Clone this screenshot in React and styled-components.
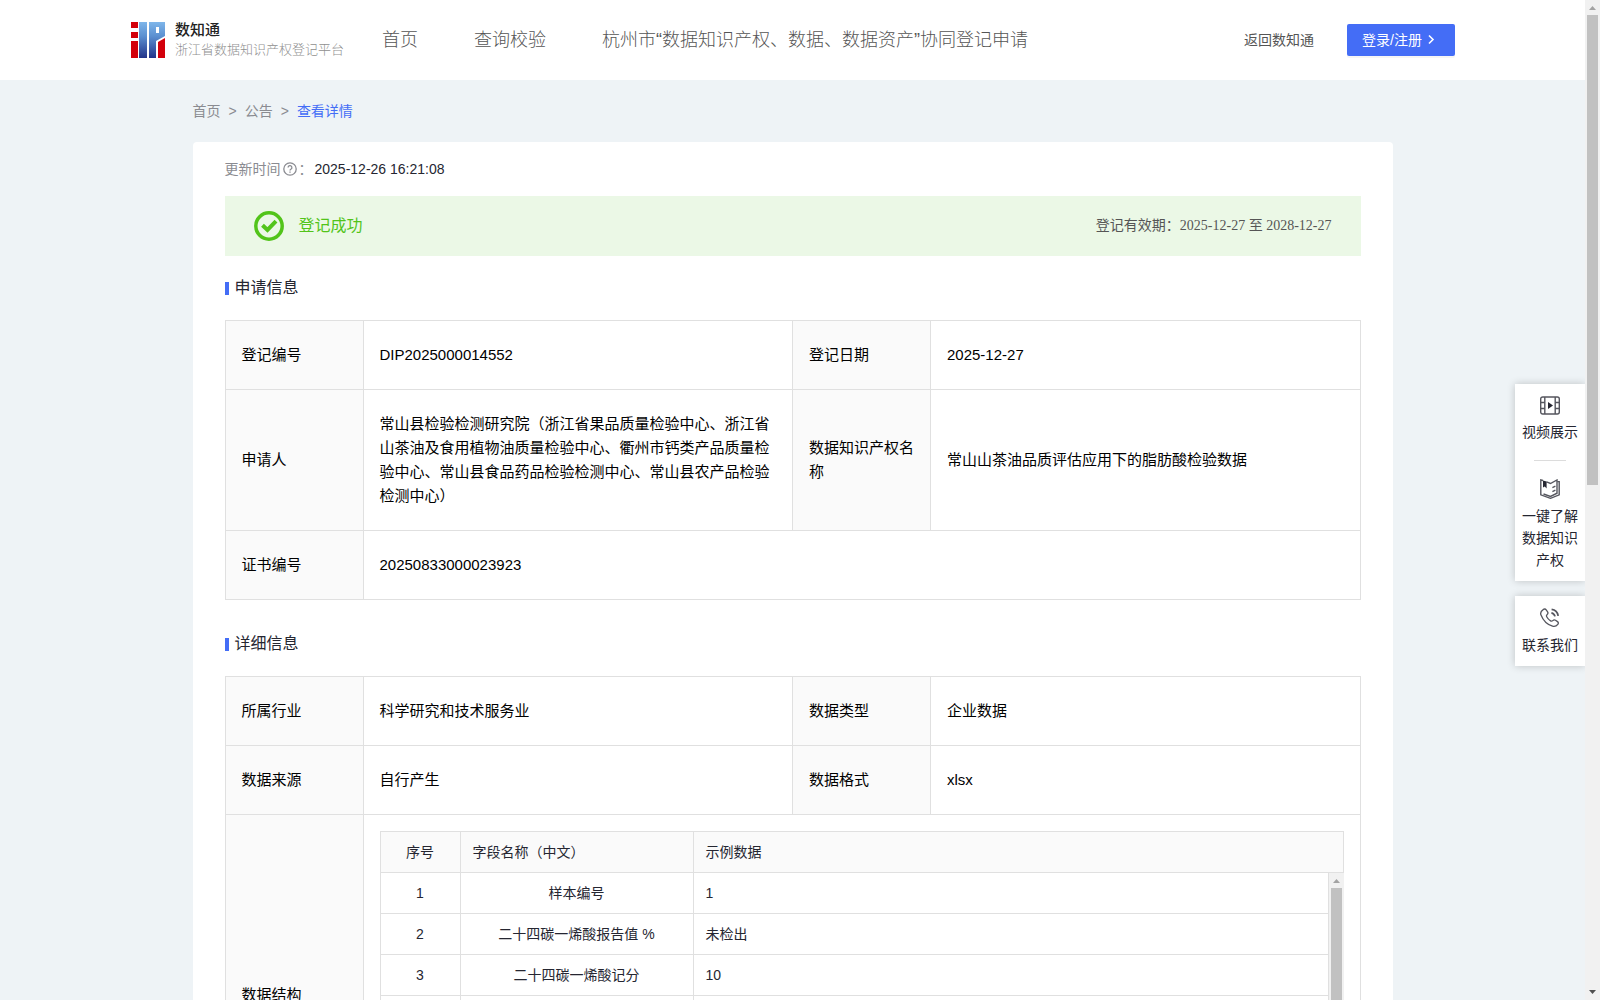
import React from 'react';
import styled, { createGlobalStyle, ThemeProvider } from 'styled-components';

const theme = {
  primary: '#446df6',
  success: '#52c41a',
  successFill: '#ebf8e6',
  page: '#eef3f6',
  line: '#e0e0e0',
  fill: '#fafafa',
  text: '#252631',
  nav: '#555555',
  muted: '#8a8b91',
  sans: '"Liberation Sans", "Noto Sans CJK SC", sans-serif',
  serif: '"Liberation Serif", "Noto Sans CJK SC", serif'
};

const GlobalStyle = createGlobalStyle`
  * {
    box-sizing: border-box;
  }

  body {
    margin: 0;
    font-family: ${theme.sans};
    font-size: 14px;
    line-height: 22px;
    color: ${theme.text};
  }

  a {
    color: inherit;
    text-decoration: none;
  }
`;

const Shell = styled.div`
  display: flex;
  height: 100vh;
  overflow: hidden;
  position: relative;
`;

const Page = styled.div`
  background: ${props => props.theme.page};
  flex: 1;
  min-width: 0;
  overflow: hidden;
`;

const Header = styled.header`
  align-items: center;
  background: #fff;
  display: flex;
  height: 80px;
  padding: 0 130px 0 131px;
`;

const Brand = styled.a`
  align-items: center;
  display: flex;
  gap: 10px;
  margin-right: 38px;
`;

const BrandText = styled.span`
  display: flex;
  flex-direction: column;
`;

const BrandName = styled.strong`
  color: #222;
  font-size: 15px;
  font-weight: 500;
  line-height: 20px;
`;

const BrandSub = styled.span`
  color: #8f8f8f;
  font-size: 13px;
  font-weight: 300;
  line-height: 20px;
`;

const Nav = styled.nav`
  color: ${props => props.theme.nav};
  display: flex;
  flex: 1;
  font-size: 18px;
  font-weight: 300;
  gap: 56px;
  line-height: 24px;
  white-space: nowrap;
`;

const BackLink = styled.a`
  color: ${props => props.theme.nav};
  margin-right: 33px;
`;

const LoginButton = styled.button`
  align-items: center;
  background: ${props => props.theme.primary};
  border: 0;
  border-radius: 2px;
  box-shadow: 0 2px 0 rgba(0, 0, 0, 0.04);
  color: #fff;
  display: flex;
  font: inherit;
  gap: 4px;
  height: 32px;
  padding: 0 15px;
  white-space: nowrap;
`;

const Container = styled.main`
  margin: 0 auto;
  max-width: 1200px;
`;

const Breadcrumb = styled.nav`
  color: ${props => props.theme.muted};
  display: flex;
  gap: 8px;
  padding: 20px 0;

  [aria-current] {
    color: ${props => props.theme.primary};
  }
`;

const Card = styled.div`
  background: #fff;
  border-radius: 4px;
  padding: 0 32px 32px;
`;

const Updated = styled.div`
  align-items: center;
  display: flex;
  height: 54px;
`;

const UpdatedLabel = styled.span`
  align-items: center;
  color: ${props => props.theme.muted};
  display: flex;
  gap: 2px;
  margin-right: 2px;
`;

const Banner = styled.div`
  align-items: center;
  background: ${props => props.theme.successFill};
  display: flex;
  height: 60px;
  justify-content: space-between;
  padding: 0 29px;
`;

const BannerStatus = styled.div`
  align-items: center;
  color: ${props => props.theme.success};
  display: flex;
  font-size: 16px;
  gap: 15px;
`;

const BannerPeriod = styled.div`
  color: ${props => props.theme.nav};
  font-family: ${props => props.theme.serif};
`;

const SectionTitle = styled.h2`
  align-items: center;
  display: flex;
  font-size: 16px;
  font-weight: 400;
  gap: 6px;
  height: 64px;
  margin: 0;

  &::before {
    background: ${props => props.theme.primary};
    content: '';
    height: 13px;
    width: 4px;
  }
`;

const InfoTable = styled.table`
  border: solid ${props => props.theme.line};
  border-width: 1px 0 0 1px;
  border-spacing: 0;
  color: #000;
  font-size: 15px;
  line-height: 24px;
  margin-bottom: 12px;
  table-layout: fixed;
  width: 100%;
`;

const LabelCol = styled.col`
  width: 138px;
`;

const InfoLabel = styled.th`
  background: ${props => props.theme.fill};
  border: solid ${props => props.theme.line};
  border-width: 0 1px 1px 0;
  font-weight: 400;
  padding: 22px 15px 22px 16px;
  text-align: left;
`;

const InfoValue = styled.td`
  border: solid ${props => props.theme.line};
  border-width: 0 1px 1px 0;
  padding: ${props => (props.$nested ? '16px' : '22px 16px')};
`;

const FieldTable = styled.table`
  border-left: 1px solid ${props => props.theme.line};
  border-spacing: 0;
  color: ${props => props.theme.text};
  flex: 1;
  font-size: 14px;
  line-height: 22px;
  table-layout: fixed;
  width: 100%;

  th,
  td {
    border: solid ${props => props.theme.line};
    border-width: 0 1px 1px 0;
    font-weight: 400;
    height: 41px;
    padding: 0 12px;
    text-align: left;
  }

  th {
    background: ${props => props.theme.fill};
    border-top-width: 1px;
    height: 42px;
  }

  th:first-child,
  td:nth-child(-n + 2) {
    text-align: center;
  }
`;

const IndexCol = styled.col`
  width: 80px;
`;

const NameCol = styled.col`
  width: 233px;
`;

const FieldBody = styled.div`
  align-items: flex-start;
  display: flex;
  height: 286px;
  overflow: hidden;
`;

const Track = styled.div`
  align-items: center;
  align-self: stretch;
  background: #f1f1f1;
  display: flex;
  flex: none;
  flex-direction: column;
  width: 15px;
`;

const Thumb = styled.div`
  background: #c1c1c1;
  height: ${props => props.$size};
  width: 11px;
`;

const Arrow = styled.svg`
  display: block;
  flex: none;
  height: 15px;
  margin-top: ${props => (props.$end ? 'auto' : 0)};
  width: 15px;
`;

const Floating = styled.aside`
  display: flex;
  flex-direction: column;
  gap: 15px;
  position: absolute;
  right: 15px;
  top: 384px;
  width: 70px;
`;

const FloatCard = styled.div`
  background: #fff;
  box-shadow: 0 0 8px rgba(0, 0, 0, 0.2);
  clip-path: inset(-10px 0 -10px -10px);
  padding: 0 7px;
`;

const FloatLink = styled.a`
  align-items: center;
  display: flex;
  flex-direction: column;
  gap: 6px;
  padding: 12px 0 10px;
  text-align: center;

  & + &::before {
    background: #dcdcdc;
    content: '';
    height: 1px;
    margin: -1px 0 12px;
    width: 32px;
  }

  &:not(:last-child) {
    padding-bottom: 18px;
  }

  & + & {
    padding-top: 0;
  }
`;

const LogoMark = () => (
  <svg width="34" height="36" viewBox="0 0 34 36" aria-hidden="true">
    <defs>
      <linearGradient id="logo-blue" x1="0" y1="0" x2="0" y2="36" gradientUnits="userSpaceOnUse">
        <stop offset="0" stopColor="#7fb6ea" />
        <stop offset="0.4" stopColor="#5b8fd0" />
        <stop offset="1" stopColor="#22348a" />
      </linearGradient>
    </defs>
    <path fill="#d3000b" d="M0 0h7v6H0zM0 10h7v6H0zM0 19h7v17H0zM27 20l7-4v20h-7z" />
    <path fill="url(#logo-blue)" d="M8 0h8v36H8zM18 0h16v14l-9 5v17h-7zM25 5v6h3V5z" fillRule="evenodd" />
  </svg>
);

const ChevronIcon = () => (
  <svg width="14" height="14" viewBox="0 0 14 14" fill="none" stroke="currentColor" strokeWidth="1.6" aria-hidden="true">
    <path d="M3 2.5l4 4-4 4" />
  </svg>
);

const HelpIcon = () => (
  <svg width="14" height="14" viewBox="0 0 14 14" fill="none" stroke="currentColor" strokeWidth="1.3" aria-hidden="true">
    <circle cx="7" cy="7" r="6.2" />
    <path d="M5.1 5.6a1.9 1.9 0 1 1 2.8 1.6c-.6.4-.9.6-.9 1.3M7 9.6v1.2" />
  </svg>
);

const SuccessIcon = () => (
  <svg width="30" height="30" viewBox="0 0 30 30" fill="none" stroke="currentColor" aria-hidden="true">
    <circle cx="15" cy="15" r="13.2" strokeWidth="3.5" />
    <path d="M8.5 14.2l5 4.8 8.5-8.8" strokeWidth="4" />
  </svg>
);

const VideoIcon = () => (
  <svg width="20" height="19" viewBox="0 0 20 19" fill="none" stroke="#55565e" strokeWidth="1.4" aria-hidden="true">
    <rect x="0.7" y="1" width="18.6" height="17" rx="2" />
    <path d="M4.8 1v17M15.2 1v17M.7 6.5h4M.7 12.5h4M15.2 6.5h4M15.2 12.5h4" />
    <path d="M8 6l5 3.5L8 13z" fill="#252631" stroke="none" />
  </svg>
);

const BookIcon = () => (
  <svg width="20" height="20" viewBox="0 0 20 20" fill="none" stroke="#55565e" strokeWidth="1.4" aria-hidden="true">
    <path d="M3 1.5L.8 1v14.8l9.7 3.5 8.7-3.5V2.6h-2" />
    <path d="M6.5 2.8l4 1.7L17 1v13.2l-6.5 3.2-7-2.4M12.4 8.6l3-1.4M12.4 12.6l3-1.4" />
    <path d="M3 1.4l3.6 1.2v7L4.8 7.6 3 8.4z" fill="#252631" stroke="none" />
  </svg>
);

const PhoneIcon = () => (
  <svg width="20" height="20" viewBox="0 0 20 20" fill="none" stroke="#55565e" strokeWidth="1.3" aria-hidden="true">
    <path d="M3.2 1.6c1-.9 2.2-.8 3 .2l1.4 2c.6 1 .4 1.9-.4 2.6-.9.8-1 1.4-.5 2.3.9 1.7 2.2 3.1 3.9 4.2.8.5 1.5.4 2.2-.3.8-.8 1.7-1 2.7-.4l2 1.4c1 .7 1.1 1.8.3 2.8-1.3 1.7-3.2 2.4-5.3 1.8C7.3 16.6 3.1 12.3 1 7 .2 5 1.2 2.9 3.2 1.6z" />
    <path d="M11.4 4.8c2 .4 3.1 1.6 3.6 3.6M11.6 1.4c3.6.5 6 2.9 6.6 6.5" strokeWidth="1.8" />
  </svg>
);

const ScrollArrow = ({ down }) => (
  <Arrow viewBox="0 0 15 15" $end={down} aria-hidden="true">
    <path d={down ? 'M4 5h7l-3.5 4z' : 'M4 10h7l-3.5-4z'} fill={down ? '#505050' : '#a3a3a3'} />
  </Arrow>
);

const fields = [
  ['1', '样本编号', '1'],
  ['2', '二十四碳一烯酸报告值 %', '未检出'],
  ['3', '二十四碳一烯酸记分', '10'],
  ['', '', '']
];

const InfoCols = () => (
  <colgroup>
    <LabelCol />
    <col />
    <LabelCol />
    <col />
  </colgroup>
);

const FieldCols = () => (
  <colgroup>
    <IndexCol />
    <NameCol />
    <col />
  </colgroup>
);

const Fields = () => (
  <>
    <FieldTable>
      <FieldCols />
      <thead>
        <tr>
          <th>序号</th>
          <th>字段名称（中文）</th>
          <th>示例数据</th>
        </tr>
      </thead>
    </FieldTable>
    <FieldBody>
      <FieldTable>
        <FieldCols />
        <tbody>
          {fields.map(([index, name, sample]) => (
            <tr key={index}>
              <td>{index}</td>
              <td>{name}</td>
              <td>{sample}</td>
            </tr>
          ))}
        </tbody>
      </FieldTable>
      <Track>
        <ScrollArrow />
        <Thumb $size="140px" />
        <ScrollArrow down />
      </Track>
    </FieldBody>
  </>
);

export default function App() {
  return (
    <ThemeProvider theme={theme}>
      <GlobalStyle />
      <Shell>
        <Page>
          <Header>
            <Brand href="#home">
              <LogoMark />
              <BrandText>
                <BrandName>数知通</BrandName>
                <BrandSub>浙江省数据知识产权登记平台</BrandSub>
              </BrandText>
            </Brand>
            <Nav>
              <a href="#home">首页</a>
              <a href="#verify">查询校验</a>
              <a href="#apply">杭州市“数据知识产权、数据、数据资产”协同登记申请</a>
            </Nav>
            <BackLink href="#back">返回数知通</BackLink>
            <LoginButton type="button">
              登录/注册
              <ChevronIcon />
            </LoginButton>
          </Header>

          <Container>
            <Breadcrumb aria-label="breadcrumb">
              <a href="#home">首页</a>
              <span>&gt;</span>
              <a href="#notices">公告</a>
              <span>&gt;</span>
              <a href="#detail" aria-current="page">查看详情</a>
            </Breadcrumb>

            <Card>
              <Updated>
                <UpdatedLabel>
                  更新时间
                  <HelpIcon />
                  ：
                </UpdatedLabel>
                <time>2025-12-26 16:21:08</time>
              </Updated>

              <Banner>
                <BannerStatus>
                  <SuccessIcon />
                  登记成功
                </BannerStatus>
                <BannerPeriod>登记有效期：2025-12-27 至 2028-12-27</BannerPeriod>
              </Banner>

              <SectionTitle>申请信息</SectionTitle>
              <InfoTable>
                <InfoCols />
                <tbody>
                  <tr>
                    <InfoLabel>登记编号</InfoLabel>
                    <InfoValue>DIP2025000014552</InfoValue>
                    <InfoLabel>登记日期</InfoLabel>
                    <InfoValue>2025-12-27</InfoValue>
                  </tr>
                  <tr>
                    <InfoLabel>申请人</InfoLabel>
                    <InfoValue>
                      常山县检验检测研究院（浙江省果品质量检验中心、浙江省山茶油及食用植物油质量检验中心、衢州市钙类产品质量检验中心、常山县食品药品检验检测中心、常山县农产品检验检测中心）
                    </InfoValue>
                    <InfoLabel>数据知识产权名称</InfoLabel>
                    <InfoValue>常山山茶油品质评估应用下的脂肪酸检验数据</InfoValue>
                  </tr>
                  <tr>
                    <InfoLabel>证书编号</InfoLabel>
                    <InfoValue colSpan={3}>20250833000023923</InfoValue>
                  </tr>
                </tbody>
              </InfoTable>

              <SectionTitle>详细信息</SectionTitle>
              <InfoTable>
                <InfoCols />
                <tbody>
                  <tr>
                    <InfoLabel>所属行业</InfoLabel>
                    <InfoValue>科学研究和技术服务业</InfoValue>
                    <InfoLabel>数据类型</InfoLabel>
                    <InfoValue>企业数据</InfoValue>
                  </tr>
                  <tr>
                    <InfoLabel>数据来源</InfoLabel>
                    <InfoValue>自行产生</InfoValue>
                    <InfoLabel>数据格式</InfoLabel>
                    <InfoValue>xlsx</InfoValue>
                  </tr>
                  <tr>
                    <InfoLabel>数据结构</InfoLabel>
                    <InfoValue colSpan={3} $nested>
                      <Fields />
                    </InfoValue>
                  </tr>
                </tbody>
              </InfoTable>
            </Card>
          </Container>
        </Page>

        <Floating>
          <FloatCard>
            <FloatLink href="#video">
              <VideoIcon />
              视频展示
            </FloatLink>
            <FloatLink href="#guide">
              <BookIcon />
              一键了解数据知识产权
            </FloatLink>
          </FloatCard>
          <FloatCard>
            <FloatLink href="#contact">
              <PhoneIcon />
              联系我们
            </FloatLink>
          </FloatCard>
        </Floating>

        <Track>
          <ScrollArrow />
          <Thumb $size="47vh" />
          <ScrollArrow down />
        </Track>
      </Shell>
    </ThemeProvider>
  );
}
